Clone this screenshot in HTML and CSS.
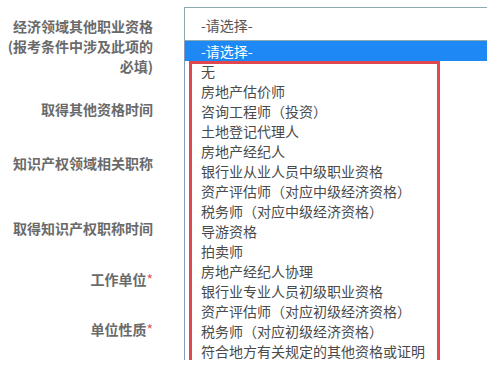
FILE: index.html
```html
<!DOCTYPE html>
<html><head>
<meta charset="utf-8">
<title>报名信息</title>
<link rel="stylesheet" href="styles.css">
</head><body>
<div class="form">
  <div class="row row1">
    <div class="label">经济领域其他职业资格<br>(报考条件中涉及此项的<br>必填)</div>
    <div class="field">
      <div class="select">-请选择-</div>
      <div class="dropdown">
        <div class="opt active">-请选择-</div>
        <div class="opt">无</div>
        <div class="opt">房地产估价师</div>
        <div class="opt">咨询工程师（投资）</div>
        <div class="opt">土地登记代理人</div>
        <div class="opt">房地产经纪人</div>
        <div class="opt">银行业从业人员中级职业资格</div>
        <div class="opt">资产评估师（对应中级经济资格）</div>
        <div class="opt">税务师（对应中级经济资格）</div>
        <div class="opt">导游资格</div>
        <div class="opt">拍卖师</div>
        <div class="opt">房地产经纪人协理</div>
        <div class="opt">银行业专业人员初级职业资格</div>
        <div class="opt">资产评估师（对应初级经济资格）</div>
        <div class="opt">税务师（对应初级经济资格）</div>
        <div class="opt">符合地方有关规定的其他资格或证明</div>
      </div>
      <div class="mark"></div>
    </div>
  </div>
  <div class="row row2"><div class="label">取得其他资格时间</div></div>
  <div class="row row3"><div class="label">知识产权领域相关职称</div></div>
  <div class="row row4"><div class="label">取得知识产权职称时间</div></div>
  <div class="row row5"><div class="label">工作单位<span class="req">*</span></div></div>
  <div class="row row6"><div class="label">单位性质<span class="req">*</span></div></div>
</div>
</body></html>
```

FILE: styles.css
```css
body {margin: 0; background: #fff; font-family: "Noto Sans CJK SC", "Microsoft YaHei", sans-serif; font-size: 14px; overflow: hidden;}
.form {padding-top: 7px;}
.row {display: flex; gap: 31px;}
.row1 {height: 83px;}
.row2 {height: 54px;}
.row3 {height: 65px;}
.row4 {height: 51px;}
.row5 {height: 50px;}
.row6 {height: 50px;}
.label {width: 153px; flex: none; text-align: right; padding-top: 9px; line-height: 20px; font-weight: bold; color: #6a6a6a;}
.req {color: #e05a5a; font-weight: normal;}
.field {position: relative; flex: 1;}
.select {height: 32px; line-height: 34px; border: 1px solid #8fa9b3; border-right: none; padding-left: 16px; color: #555;}
.dropdown {position: absolute; top: 34px; left: 0; right: 0; border-left: 1px solid #8b98b8; border-bottom: 1px solid #7f8fa0; background: #fff; z-index: 2;}
.opt {height: 20px; line-height: 20px; padding-left: 16px; color: #4a4a4a; white-space: nowrap;}
.opt.active {background: #1e88f5; color: #fff;}
.mark {position: absolute; top: 54px; left: 5px; width: 245px; height: 300px; border: 3px solid #e1474e; z-index: 3;}
```
